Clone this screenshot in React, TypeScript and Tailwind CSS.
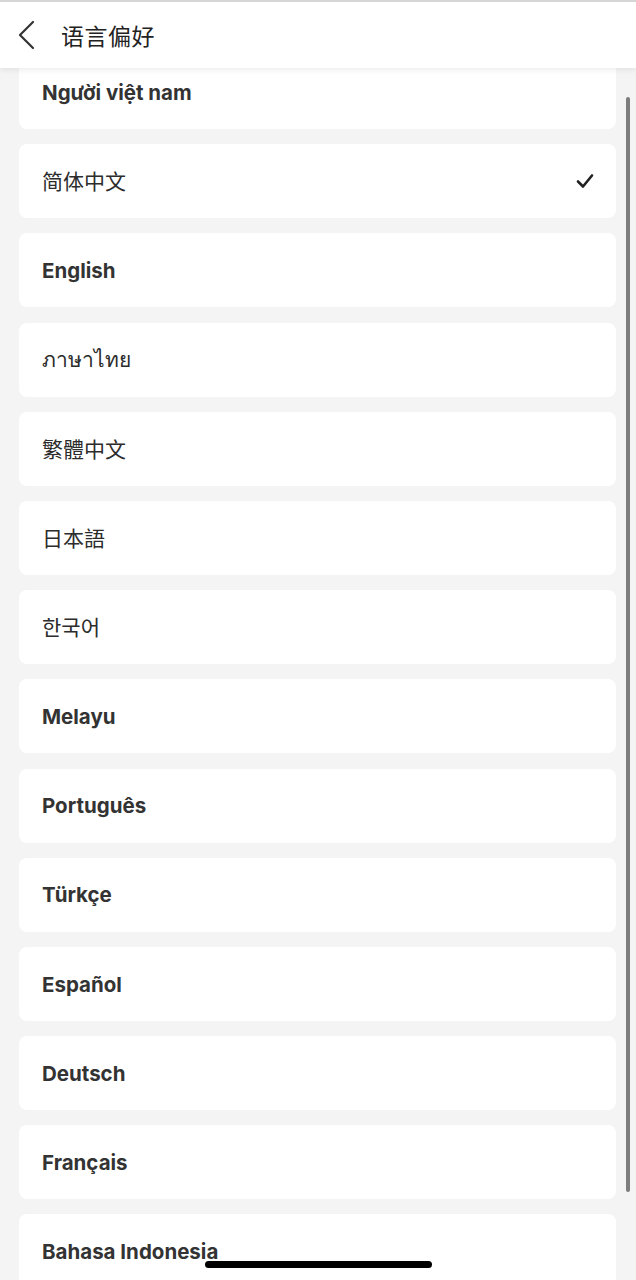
const LANGS: Array<{ label: string; cjk?: boolean; thai?: boolean; checked?: boolean }> = [
  { label: "Người việt nam" },
  { label: "简体中文", cjk: true, checked: true },
  { label: "English" },
  { label: "ภาษาไทย", thai: true },
  { label: "繁體中文", cjk: true },
  { label: "日本語", cjk: true },
  { label: "한국어", cjk: true },
  { label: "Melayu" },
  { label: "Português" },
  { label: "Türkçe" },
  { label: "Español" },
  { label: "Deutsch" },
  { label: "Français" },
  { label: "Bahasa Indonesia" },
];

export default function App() {
  return (
    <div
      className="relative h-[1280px] w-[636px] overflow-hidden bg-[#f4f4f4] flex flex-col"
      style={{ fontFamily: 'Inter, "Noto Sans", "Noto Sans CJK SC", sans-serif' }}
    >
      {/* Header */}
      <div className="relative z-10 h-[68px] shrink-0 bg-white border-t-[2px] border-[#d6d6d6] shadow-[0_2px_6px_rgba(0,0,0,0.08)] flex items-center">
        <svg width="22" height="30" viewBox="0 0 22 30" fill="none" className="ml-[16px]">
          <path d="M17 2 L4 15 L17 28" stroke="#333" strokeWidth="2.2" strokeLinecap="round" strokeLinejoin="round" />
        </svg>
        <h1 className="ml-[23px] text-[23px] text-[#222] tracking-[0.5px]"
          style={{ fontFamily: '"Noto Sans CJK SC", sans-serif' }}>
          语言偏好
        </h1>
      </div>

      {/* List */}
      <div className="-mt-[13px] flex flex-col gap-[15.2px] px-[19px] pr-[20px]">
        {LANGS.map(l => (
          <div key={l.label}
            className="h-[74px] shrink-0 bg-white rounded-[8px] flex items-center justify-between pl-[23px] pr-[22px]">
            {l.cjk ? (
              <span className="text-[21px] text-[#2c2c2c]"
                style={{ fontFamily: '"Noto Sans CJK SC", "Noto Sans", sans-serif' }}>
                {l.label}
              </span>
            ) : l.thai ? (
              <span className="text-[21px] font-medium text-[#2c2c2c]"
                style={{ fontFamily: '"Noto Sans", sans-serif' }}>
                {l.label}
              </span>
            ) : (
              <span className="text-[20.5px] font-bold text-[#333] pt-[2px]">{l.label}</span>
            )}
            {l.checked && (
              <svg width="18" height="16" viewBox="0 0 18 16" fill="none">
                <path d="M2 8.5 L7 13.5 L16 2.5" stroke="#222" strokeWidth="2.6" strokeLinecap="round" strokeLinejoin="round" />
              </svg>
            )}
          </div>
        ))}
      </div>

      {/* Scrollbar */}
      <div className="absolute left-[626px] top-[97px] h-[1095px] w-[4px] rounded-full bg-[#7d7d7d]" />

      {/* Home indicator */}
      <div className="absolute left-[205px] top-[1261px] h-[7px] w-[227px] rounded-full bg-black" />
    </div>
  );
}
